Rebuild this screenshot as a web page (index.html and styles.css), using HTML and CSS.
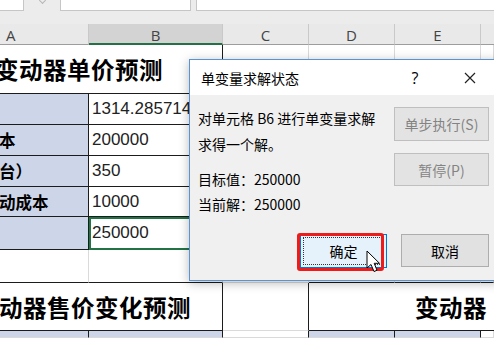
FILE: index.html
```html
<!DOCTYPE html>
<html lang="zh-CN">

<head>
    <meta charset="UTF-8" />
    <meta name="viewport" content="width=device-width, initial-scale=1.0" />
    <title>单变量求解状态</title>
    <link rel="stylesheet" href="styles.css">
</head>

<body>

    <!-- formula bar strip -->
    <div class="topbar">
        <div class="box box-name"></div>
        <span class="drop"></span>
        <div class="box box-icons"></div>
        <div class="box box-formula"></div>
    </div>

    <!-- worksheet -->
    <div class="sheet">
        <div class="hd hd-a">A</div>
        <div class="hd hd-sel">B</div>
        <div class="hd">C</div>
        <div class="hd">D</div>
        <div class="hd">E</div>
        <div class="hd hd-last"></div>

        <div class="cell title tb-r tb-b"><span class="title-text">变动器单价预测</span></div>
        <div class="cell"></div>
        <div class="cell"></div>
        <div class="cell"></div>
        <div class="cell"></div>

        <div class="cell lab tb-r tb-b"></div>
        <div class="cell val tb-r tb-b">1314.285714</div>
        <div class="cell"></div>
        <div class="cell"></div>
        <div class="cell"></div>
        <div class="cell"></div>

        <div class="cell lab tb-r tb-b">本</div>
        <div class="cell val tb-r tb-b">200000</div>
        <div class="cell"></div>
        <div class="cell"></div>
        <div class="cell"></div>
        <div class="cell"></div>

        <div class="cell lab tb-r tb-b">台）</div>
        <div class="cell val tb-r tb-b">350</div>
        <div class="cell"></div>
        <div class="cell"></div>
        <div class="cell"></div>
        <div class="cell"></div>

        <div class="cell lab tb-r tb-b">动成本</div>
        <div class="cell val tb-r tb-b">10000</div>
        <div class="cell"></div>
        <div class="cell"></div>
        <div class="cell"></div>
        <div class="cell"></div>

        <div class="cell lab tb-r tb-b"></div>
        <div class="cell val tb-r tb-b picked">250000</div>
        <div class="cell"></div>
        <div class="cell"></div>
        <div class="cell"></div>
        <div class="cell"></div>

        <div class="cell tb-b"></div>
        <div class="cell tb-b"></div>
        <div class="cell"></div>
        <div class="cell tb-b"></div>
        <div class="cell tb-b"></div>
        <div class="cell tb-b"></div>

        <div class="cell title tb-r tb-b"><span class="title-text title-low">动器售价变化预测</span></div>
        <div class="cell tb-r"></div>
        <div class="cell title title-right tb-b"><span class="title-text">变动器</span></div>

        <div class="cell lab tb-r"></div>
        <div class="cell lab tb-r"></div>
        <div class="cell tb-r"></div>
        <div class="cell lab tb-r"></div>
        <div class="cell lab tb-r"></div>
        <div class="cell"></div>
    </div>

    <!-- goal seek status dialog -->
    <div class="dialog">
        <div class="dlg-title">
            <span class="dlg-name">单变量求解状态</span>
            <span class="dlg-help">?</span>
            <span class="dlg-close">
                <svg width="12" height="12" viewBox="0 0 12 12">
                    <path d="M1 1 L11 11 M11 1 L1 11" stroke="#222" stroke-width="1.2" fill="none" />
                </svg>
            </span>
        </div>
        <div class="dlg-body">
            <div class="dlg-text">
                <p class="msg">对单元格 B6 进行单变量求解<br>求得一个解。</p>
                <p class="nums">目标值：250000<br>当前解：250000</p>
            </div>
            <div class="dlg-side">
                <button class="btn btn-off btn-step">单步执行(S)</button>
                <button class="btn btn-off">暂停(P)</button>
            </div>
        </div>
        <div class="dlg-foot">
            <button class="btn btn-ok"><span class="focus">确定</span></button>
            <button class="btn btn-cancel">取消</button>
        </div>
    </div>

    <!-- red annotation around the OK button -->
    <div class="mark"></div>

    <svg class="cursor" width="17" height="23" viewBox="0 0 17 23">
        <path d="M1 1 L1 18 L5 14.5 L8 21.5 L11 20.3 L8.2 13.3 L13.5 13.3 Z" fill="#fff" stroke="#000" stroke-width="1" stroke-linejoin="round" />
    </svg>

</body>

</html>
```

FILE: styles.css
```css
body {
    margin: 0;
    width: 494px;
    height: 338px;
    overflow: hidden;
    position: relative;
    background: #fff;
    font-family: 'Noto Sans CJK SC', sans-serif;
    color: #000;
}

/* formula bar strip */

.topbar {
    height: 24px;
    background: #ececec;
    display: flex;
    align-items: flex-start;
    box-sizing: border-box;
}

.box {
    height: 12px;
    margin-top: -1px;
    background: #fff;
    border: 1px solid #c6c6c6;
    box-sizing: border-box;
}

.box-name {
    width: 26px;
    margin-left: -2px;
}

.drop {
    width: 36px;
    display: flex;
    justify-content: center;
}

.drop::before {
    content: "";
    width: 4px;
    height: 4px;
    margin-top: -2px;
    border-right: 1px solid #b5b5b5;
    border-bottom: 1px solid #b5b5b5;
    transform: rotate(45deg);
}

.box-icons {
    width: 131px;
}

.box-formula {
    margin-left: 5px;
    flex: 1;
    border-right: none;
}

/* worksheet */

.sheet {
    display: grid;
    grid-template-columns: 89px 134px 86px 86px 86px 1fr;
    grid-template-rows: 21px 49px 31px 31px 31px 30px 33px 33px 48px 1fr;
    height: 314px;
}

.hd {
    background: #e9e9e9;
    border-right: 1px solid #c9c9c9;
    border-bottom: 1px solid #9d9d9d;
    font-family: 'Open Sans', sans-serif;
    font-size: 15px;
    color: #444;
    text-align: center;
    line-height: 23px;
    box-sizing: border-box;
}

.hd-a {
    text-align: left;
    padding-left: 6px;
}

.hd-sel {
    background: #d3d3d3;
    border-bottom: 2px solid #217346;
}

.hd-last {
    border-right: none;
}

.cell {
    border-right: 1px solid #dadada;
    border-bottom: 1px solid #dadada;
    box-sizing: border-box;
    overflow: hidden;
    white-space: nowrap;
}

.tb-r {
    border-right-color: #1c1c1c;
}

.tb-b {
    border-bottom-color: #1c1c1c;
}

.title {
    grid-column: span 2;
    display: flex;
    align-items: center;
}

.title-text {
    font-size: 23.5px;
    font-weight: bold;
    letter-spacing: 0.5px;
    margin-left: -5px;
}

.title-low {
    margin-left: -1px;
}

.title-right {
    grid-column: span 3;
    border-right: none;
    padding-left: 111px;
}

.lab {
    background: #cdd6e9;
    font-size: 16.5px;
    font-weight: bold;
    line-height: 30px;
    text-indent: -1px;
}

.val {
    font-family: 'Liberation Sans', sans-serif;
    font-size: 17px;
    color: #222;
    line-height: 29px;
    padding-left: 3px;
}

.picked {
    outline: 2px solid #217346;
    outline-offset: -2px;
    line-height: 31px;
}

/* dialog */

.dialog {
    position: absolute;
    left: 189px;
    top: 59px;
    width: 312px;
    height: 222px;
    box-sizing: border-box;
    border: 1px solid #5a93d4;
    background: #f0f0f0;
    box-shadow: 0 2px 10px rgba(0, 0, 0, 0.28);
    font-size: 14px;
}

.dlg-title {
    height: 35px;
    background: #fff;
    display: flex;
    align-items: center;
    padding-left: 11px;
}

.dlg-name {
    flex: 1;
}

.dlg-help {
    width: 50px;
    text-align: center;
    font-family: 'Open Sans', sans-serif;
    font-size: 16px;
}

.dlg-close {
    width: 60px;
    display: flex;
    justify-content: center;
}

.dlg-body {
    display: grid;
    grid-template-columns: 1fr 95px;
    padding: 12px 11px 0 8px;
}

.dlg-text p {
    margin: 0;
}

.msg {
    line-height: 26px;
    margin-top: -2px !important;
}

.nums {
    line-height: 25px;
    margin-top: 10px !important;
}

.dlg-side {
    display: flex;
    flex-direction: column;
    gap: 12px;
}

.btn {
    font-family: 'Noto Sans CJK SC', sans-serif;
    font-size: 14px;
    background: #e1e1e1;
    border: 1px solid #adadad;
    padding: 0;
    box-sizing: border-box;
}

.btn-off {
    height: 33px;
    color: #838383;
    border-color: #bfbfbf;
    background: #e3e3e3;
}

.btn-step {
    height: 34px;
}

.dlg-foot {
    display: flex;
    justify-content: flex-end;
    gap: 14px;
    margin-top: 17px;
    padding-right: 11px;
}

.btn-ok {
    width: 87px;
    height: 34px;
    background: #e5f1fb;
    border-color: #0078d7;
    padding: 2px;
}

.focus {
    display: flex;
    align-items: center;
    justify-content: center;
    height: 100%;
    border: 1px dotted #333;
    box-sizing: border-box;
}

.btn-cancel {
    width: 88px;
    height: 33px;
    color: #000;
}

.mark {
    position: absolute;
    left: 297px;
    top: 233px;
    width: 87px;
    height: 38px;
    box-sizing: border-box;
    border: 3px solid #ee1b1b;
    border-radius: 3px;
}

.cursor {
    position: absolute;
    left: 366px;
    top: 250px;
}
```
